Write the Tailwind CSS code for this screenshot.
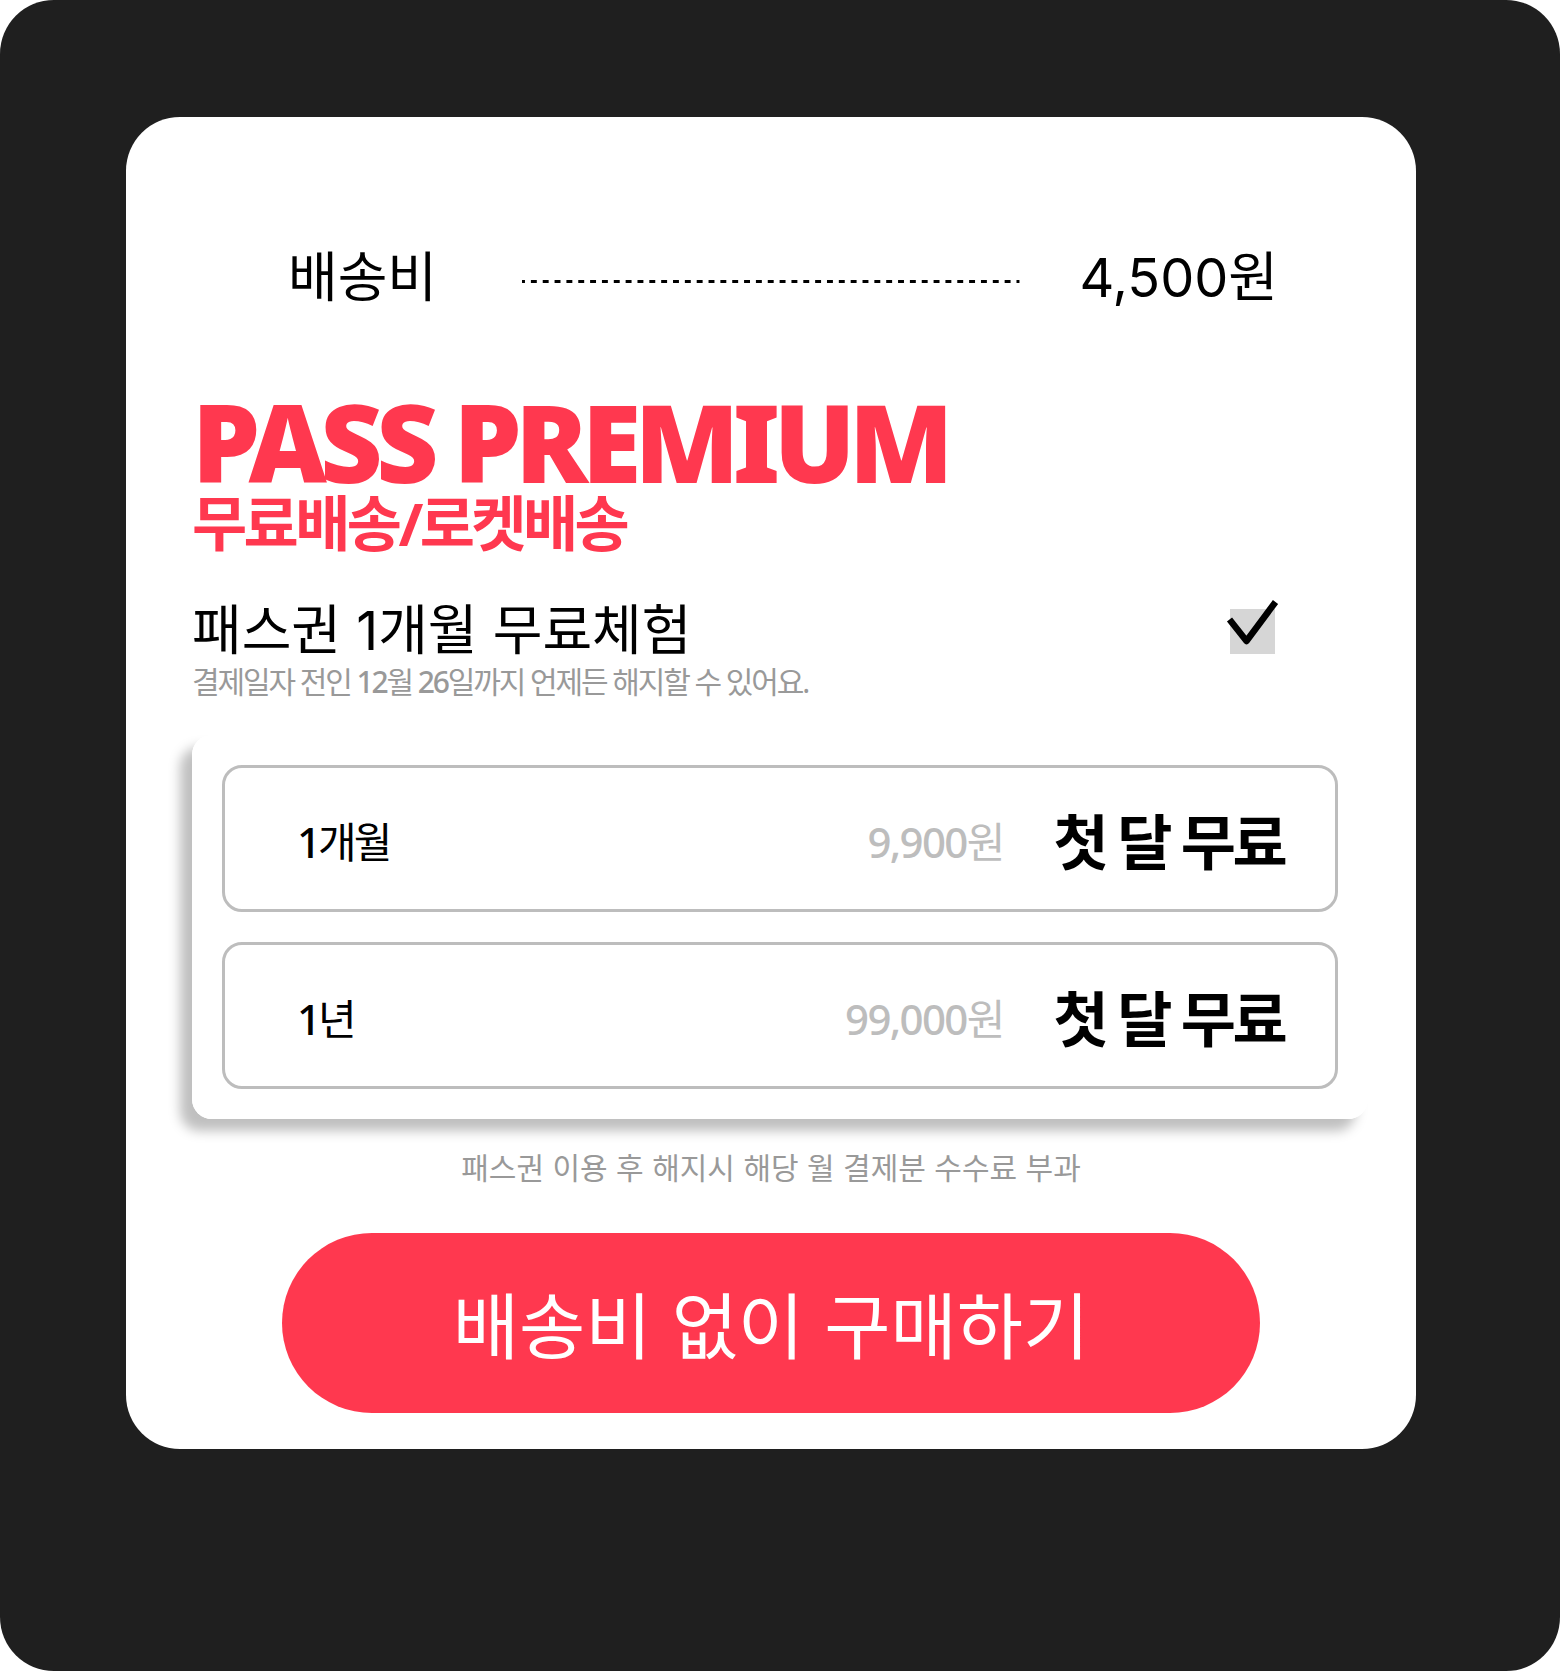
<!DOCTYPE html>
<html lang="ko">
<head>
<meta charset="utf-8">
<meta name="viewport" content="width=device-width, initial-scale=1">
<title>PASS PREMIUM</title>
<script src="https://cdn.jsdelivr.net/npm/@tailwindcss/browser@4"></script>
</head>
<body class="bg-white font-['Noto_Sans','Noto_Sans_CJK_KR',sans-serif] text-black">
<div class="min-h-screen rounded-[54px] bg-[#1f1f1f] pt-[117px] pr-36 pb-[222px] pl-[126px]">
  <main class="rounded-[54px] bg-white px-[66px] pt-[121px] pb-9">
    <dl class="flex items-center pr-[72px] pl-24 font-['Inter','Noto_Sans_CJK_KR',sans-serif] text-[54px] leading-[80px]">
      <dt class="whitespace-nowrap">배송비</dt>
      <div class="mx-[60px] mt-[6px] flex-1 pl-[25px]">
        <svg class="block h-[3px] w-full" aria-hidden="true"><line x1="0" y1="1.5" x2="100%" y2="1.5" pathLength="504" stroke="#000" stroke-width="3" stroke-dasharray="6 6" stroke-dashoffset="3"/></svg>
      </div>
      <dd class="whitespace-nowrap">4,500원</dd>
    </dl>

    <section class="mt-[69px] text-[#ff384f]">
      <h1 class="text-[108px] leading-[110px] font-black tracking-[-0.06em]">PASS PREMIUM</h1>
      <p class="text-[60px] leading-[52px] font-bold tracking-[-0.06em]">무료배송/로켓배송</p>
    </section>

    <div class="mt-[50px] flex items-center justify-between pr-[75px]">
      <label for="trial" class="font-['Inter','Noto_Sans_CJK_KR',sans-serif] text-[54px] leading-[64px]">패스권 1개월 무료체험</label>
      <span class="relative block size-[45px]">
        <input id="trial" type="checkbox" checked class="peer block size-[45px] appearance-none bg-[#d6d6d6]">
        <svg class="pointer-events-none invisible absolute -top-3 -left-3 size-[69px] peer-checked:visible" viewBox="0 0 69 69" fill="none" stroke="#000" stroke-width="6.5" stroke-linejoin="round" aria-hidden="true"><path d="M11.500 22.500L28.500 44L57.500 5"/></svg>
      </span>
    </div>
    <p class="text-[30px] leading-[38px] tracking-[-0.07em] text-[#999]">결제일자 전인 <span class="font-medium">12</span>월 <span class="font-medium">26</span>일까지 언제든 해지할 수 있어요.</p>

    <fieldset aria-label="요금제" class="mt-[34px] mr-[-18px] grid gap-[30px] rounded-[20px] bg-white p-[30px] shadow-[-12px_12px_12px_rgba(0,0,0,0.25)]">
      <label class="flex h-[147px] items-center rounded-[20px] border-3 border-[#bdbdbd] pt-[6px] pr-[51px] pl-[72px]">
        <input type="radio" name="plan" class="sr-only">
        <span class="flex-1 text-[42px] tracking-[-0.07em]"><span class="font-medium">1</span>개월</span>
        <span class="mr-[50px] text-[42px] tracking-[-0.04em] text-[#bdbdbd]"><span class="font-medium">9,900</span>원</span>
        <strong class="text-[60px] font-bold tracking-[-0.06em]">첫 달 무료</strong>
      </label>
      <label class="flex h-[147px] items-center rounded-[20px] border-3 border-[#bdbdbd] pt-[6px] pr-[51px] pl-[72px]">
        <input type="radio" name="plan" class="sr-only">
        <span class="flex-1 text-[42px] tracking-[-0.07em]"><span class="font-medium">1</span>년</span>
        <span class="mr-[50px] text-[42px] tracking-[-0.04em] text-[#bdbdbd]"><span class="font-medium">99,000</span>원</span>
        <strong class="text-[60px] font-bold tracking-[-0.06em]">첫 달 무료</strong>
      </label>
    </fieldset>

    <p class="mt-[29px] text-center font-['Inter','Noto_Sans_CJK_KR',sans-serif] text-[30px] leading-[40px] text-[#999]">패스권 이용 후 해지시 해당 월 결제분 수수료 부과</p>
    <div class="mt-[45px] px-[90px]">
      <button type="button" class="block h-[180px] w-full rounded-full bg-[#ff384f] pt-2 font-['Inter','Noto_Sans_CJK_KR',sans-serif] text-[72px] text-white">배송비 없이 구매하기</button>
    </div>
  </main>
</div>
</body>
</html>
